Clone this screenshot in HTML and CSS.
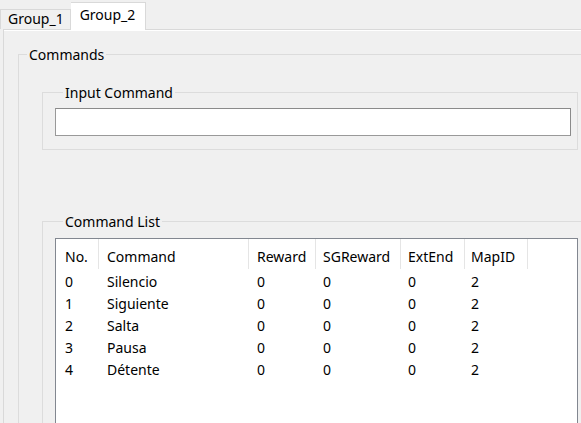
FILE: index.html
```html
<!DOCTYPE html>
<html>
<head>
<meta charset="utf-8">
<link rel="stylesheet" href="styles.css">
</head>
<body>
<div class="window">
  <div class="tabs">
    <div class="tab">Group_1</div>
    <div class="tab active">Group_2</div>
  </div>
  <div class="pane">
    <fieldset class="group commands">
      <legend>Commands</legend>
      <fieldset class="group input-group">
        <legend>Input Command</legend>
        <input class="cmd-input" type="text">
      </fieldset>
      <fieldset class="group list-group">
        <legend>Command List</legend>
        <div class="list">
          <div class="row head">
            <div class="c c1">No.</div>
            <div class="c c2">Command</div>
            <div class="c c3">Reward</div>
            <div class="c c4">SGReward</div>
            <div class="c c5">ExtEnd</div>
            <div class="c c6">MapID</div>
          </div>
          <div class="row"><div class="c c1">0</div><div class="c c2">Silencio</div><div class="c c3">0</div><div class="c c4">0</div><div class="c c5">0</div><div class="c c6">2</div></div>
          <div class="row"><div class="c c1">1</div><div class="c c2">Siguiente</div><div class="c c3">0</div><div class="c c4">0</div><div class="c c5">0</div><div class="c c6">2</div></div>
          <div class="row"><div class="c c1">2</div><div class="c c2">Salta</div><div class="c c3">0</div><div class="c c4">0</div><div class="c c5">0</div><div class="c c6">2</div></div>
          <div class="row"><div class="c c1">3</div><div class="c c2">Pausa</div><div class="c c3">0</div><div class="c c4">0</div><div class="c c5">0</div><div class="c c6">2</div></div>
          <div class="row"><div class="c c1">4</div><div class="c c2">Détente</div><div class="c c3">0</div><div class="c c4">0</div><div class="c c5">0</div><div class="c c6">2</div></div>
        </div>
      </fieldset>
    </fieldset>
  </div>
</div>
</body>
</html>
```

FILE: styles.css
```css
html, body {
  margin: 0;
  padding: 0;
  background: #f0f0f0;
  overflow: hidden;
}
body {
  font-family: "Noto Sans", "Open Sans", sans-serif;
  font-size: 14px;
  color: #000;
  width: 581px;
  height: 423px;
}
.window {
  height: 423px;
  display: flex;
  flex-direction: column;
}
.tabs {
  display: flex;
  align-items: flex-end;
  height: 29px;
  position: relative;
  z-index: 1;
}
.tab {
  box-sizing: border-box;
  height: 20px;
  line-height: 18px;
  padding: 0 6px 0 7px;
  border: 1px solid #d9d9d9;
  border-bottom: none;
  background: #f0f0f0;
  white-space: nowrap;
}
.tab.active {
  height: 28px;
  margin-bottom: -1px;
  line-height: 24px;
  padding: 0 10px 0 9px;
  background: #fff;
  border-left: none;
}
.pane {
  flex: 1;
  margin-left: 3px;
  border-top: 1px solid #d9d9d9;
  border-left: 1px solid #d9d9d9;
  box-shadow: inset 0 1px #fff;
  overflow: hidden;
}
.group {
  margin: 0;
  padding: 0;
  border: 1px solid #dcdcdc;
  min-width: 0;
}
.group > legend {
  padding: 0 2px;
  margin-left: 8px;
  line-height: 19px;
}
.commands {
  margin: 15px 0 0 14px;
  width: 620px;
  box-sizing: border-box;
  height: 420px;
}
.input-group {
  margin: 19px 0 0 23px;
  width: 536px;
  box-sizing: border-box;
  padding: 6px 6px 13px 12px;
}
.cmd-input {
  display: block;
  box-sizing: border-box;
  width: 100%;
  height: 28px;
  margin: 0;
  border: 1px solid #999;
  border-top-color: #8a8a8a;
  border-right-color: #8a8a8a;
  background: #fff;
  outline: none;
}
.list-group {
  margin: 62px 0 0 23px;
  padding: 7px 0 0 12px;
  height: 300px;
}
.list {
  width: 523px;
  height: 260px;
  box-sizing: border-box;
  background: #fff;
  border: 1px solid #828790;
}
.row {
  display: grid;
  grid-template-columns: 43px 150px 67px 85px 64px 63px;
  height: 22px;
  line-height: 22px;
}
.row.head {
  height: 32px;
  line-height: 29px;
}
.c {
  padding-left: 8px;
  white-space: nowrap;
}
.c1 { padding-left: 9px; }
.c4, .c5 { padding-left: 7px; }
.c6 { padding-left: 6px; }
.head .c {
  border-right: 1px solid #e5e5e5;
  height: 30px;
  padding-top: 3px;
  box-sizing: border-box;
}
```
